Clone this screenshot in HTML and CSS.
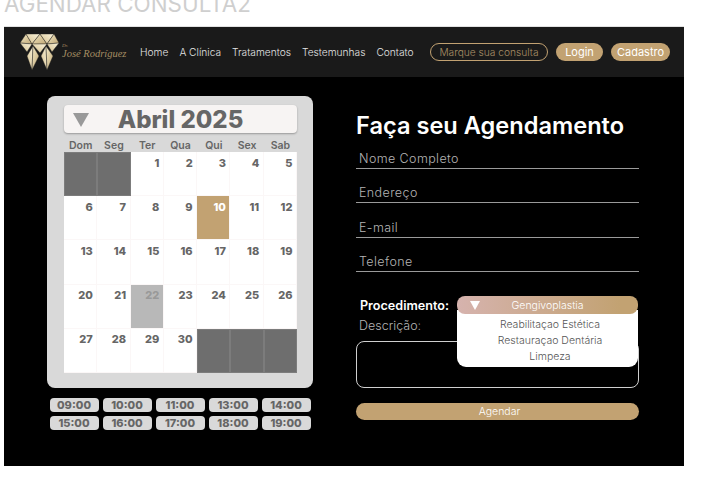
FILE: index.html
```html
<!DOCTYPE html>
<html lang="pt-BR">
<head>
    <meta charset="UTF-8" />
    <meta name="viewport" content="width=device-width, initial-scale=1.0" />
    <title>Agendar Consulta</title>
    <link rel="stylesheet" href="styles.css">
</head>
<body>

    <h2 class="page-label">AGENDAR CONSULTA2</h2>

    <div class="frame">
        <header class="top-bar">
            <div class="brand">
                <svg class="logo" viewBox="20 36 40 36" aria-hidden="true">
                    <defs>
                        <linearGradient id="goldA" x1="0" y1="0" x2="1" y2="1">
                            <stop offset="0" stop-color="#f6ecca" />
                            <stop offset="1" stop-color="#bfa673" />
                        </linearGradient>
                        <linearGradient id="goldB" x1="1" y1="0" x2="0" y2="1">
                            <stop offset="0" stop-color="#fbf4dc" />
                            <stop offset="1" stop-color="#d3bd8b" />
                        </linearGradient>
                    </defs>
                    <g stroke="#1a1a1a" stroke-width="0.4">
                        <polygon fill="url(#goldA)" points="26,36 20,45 32,46" />
                        <polygon fill="url(#goldB)" points="26,36 40,36 32,46" />
                        <polygon fill="url(#goldA)" points="40,36 32,46 47,46" />
                        <polygon fill="url(#goldB)" points="40,36 54,36 47,46" />
                        <polygon fill="url(#goldA)" points="54,36 47,46 59,45" />
                        <polygon fill="url(#goldB)" points="20,45 32,46 27,54" />
                        <polygon fill="url(#goldB)" points="32,46 47,46 40,55" />
                        <polygon fill="url(#goldB)" points="47,46 59,45 52,54" />
                        <polygon fill="url(#goldB)" points="33,48 27,58 32,72" />
                        <polygon fill="url(#goldA)" points="33,48 39,58 32,72" />
                        <polygon fill="url(#goldB)" points="46,48 41,58 47,72" />
                        <polygon fill="url(#goldA)" points="46,48 53,58 47,72" />
                    </g>
                </svg>
                <div class="brand-text">
                    <span class="brand-title">Dr.</span>
                    <span class="brand-name">José Rodríguez</span>
                </div>
            </div>
            <nav class="nav">
                <a href="#">Home</a>
                <a href="#">A Clínica</a>
                <a href="#">Tratamentos</a>
                <a href="#">Testemunhas</a>
                <a href="#">Contato</a>
            </nav>
            <div class="actions">
                <a href="#" class="pill pill-outline">Marque sua consulta</a>
                <a href="#" class="pill pill-login">Login</a>
                <a href="#" class="pill pill-signup">Cadastro</a>
            </div>
        </header>

        <main class="content">
            <section class="left-col">
                <div class="calendar">
                    <div class="month-bar">
                        <span class="arrow"></span>
                        <span class="month-name">Abril 2025</span>
                    </div>
                    <div class="weekdays">
                        <span>Dom</span><span>Seg</span><span>Ter</span><span>Qua</span><span>Qui</span><span>Sex</span><span>Sab</span>
                    </div>
                    <div class="days">
                        <div class="day off"></div>
                        <div class="day off"></div>
                        <div class="day">1</div>
                        <div class="day">2</div>
                        <div class="day">3</div>
                        <div class="day">4</div>
                        <div class="day">5</div>
                        <div class="day">6</div>
                        <div class="day">7</div>
                        <div class="day">8</div>
                        <div class="day">9</div>
                        <div class="day selected">10</div>
                        <div class="day">11</div>
                        <div class="day">12</div>
                        <div class="day">13</div>
                        <div class="day">14</div>
                        <div class="day">15</div>
                        <div class="day">16</div>
                        <div class="day">17</div>
                        <div class="day">18</div>
                        <div class="day">19</div>
                        <div class="day">20</div>
                        <div class="day">21</div>
                        <div class="day blocked">22</div>
                        <div class="day">23</div>
                        <div class="day">24</div>
                        <div class="day">25</div>
                        <div class="day">26</div>
                        <div class="day">27</div>
                        <div class="day">28</div>
                        <div class="day">29</div>
                        <div class="day">30</div>
                        <div class="day off"></div>
                        <div class="day off"></div>
                        <div class="day off"></div>
                    </div>
                </div>
                <div class="times">
                    <button class="time">09:00</button>
                    <button class="time">10:00</button>
                    <button class="time">11:00</button>
                    <button class="time">13:00</button>
                    <button class="time">14:00</button>
                    <button class="time">15:00</button>
                    <button class="time">16:00</button>
                    <button class="time">17:00</button>
                    <button class="time">18:00</button>
                    <button class="time">19:00</button>
                </div>
            </section>

            <section class="right-col">
                <h1 class="form-title">Faça seu Agendamento</h1>
                <div class="field">Nome Completo</div>
                <div class="field">Endereço</div>
                <div class="field">E-mail</div>
                <div class="field">Telefone</div>

                <div class="proc-row">
                    <span class="proc-label">Procedimento:</span>
                    <div class="select">
                        <div class="select-head">
                            <span class="select-arrow"></span>
                            <span>Gengivoplastia</span>
                        </div>
                        <ul class="select-menu">
                            <li>Reabilitaçao Estética</li>
                            <li>Restauraçao Dentária</li>
                            <li>Limpeza</li>
                        </ul>
                    </div>
                </div>
                <div class="desc-label">Descrição:</div>
                <div class="desc-box"></div>
                <button class="submit">Agendar</button>
            </section>
        </main>
    </div>

</body>
</html>
```

FILE: styles.css
```css
* {
    box-sizing: border-box;
}

body {
    margin: 0;
    background-color: #fff;
    font-family: Inter, "Liberation Sans", sans-serif;
    padding-left: 4px;
}

.page-label {
    margin: 0;
    height: 26px;
    overflow: hidden;
    font-size: 22.400px;
    font-weight: 400;
    line-height: 8px;
    color: #cfcfcf;
}

.frame {
    width: 680px;
    height: 440px;
    background-color: #000;
    border-top: 1px solid #e2e2e2;
}

.top-bar {
    display: flex;
    align-items: center;
    height: 50px;
    background-color: #1a1a1a;
    padding-left: 16px;
}

.brand {
    display: flex;
    align-items: center;
    gap: 2px;
    width: 120px;
}

.logo {
    width: 40px;
    height: 36px;
}

.brand-text {
    display: flex;
    flex-direction: column;
    font-family: "Liberation Serif", serif;
    font-style: italic;
    color: #a58d63;
    white-space: nowrap;
}

.brand-title {
    font-size: 5px;
    line-height: 4px;
}

.brand-name {
    font-size: 10.500px;
    line-height: 12px;
}

.nav {
    display: flex;
    gap: 11px;
    width: 290px;
}

.nav a {
    font-size: 10.200px;
    font-weight: 300;
    color: #e4e4e4;
    text-decoration: none;
    white-space: nowrap;
}

.actions {
    display: flex;
    gap: 8px;
}

.pill {
    display: flex;
    align-items: center;
    justify-content: center;
    height: 18px;
    border-radius: 9px;
    font-size: 11px;
    font-weight: 400;
    color: #fff;
    text-decoration: none;
    background-color: #c2a272;
}

.pill-outline {
    width: 118px;
    background: none;
    border: 1px solid #c2a272;
    color: #a98f66;
    font-size: 10.200px;
    font-weight: 300;
}

.pill-login {
    width: 47px;
}

.pill-signup {
    width: 59px;
}

.content {
    display: flex;
    gap: 43px;
    padding: 19px 0 0 43px;
}

.left-col {
    width: 266px;
}

.calendar {
    height: 292px;
    padding: 9px 16px 0 17px;
    background-color: #d9d9d9;
    border-radius: 8px;
}

.month-bar {
    position: relative;
    display: flex;
    align-items: center;
    justify-content: center;
    height: 28px;
    background-color: #f7f4f3;
    border-radius: 4px;
    box-shadow: 0 1px 2px rgba(0, 0, 0, 0.3);
}

.arrow {
    position: absolute;
    left: 9px;
    top: 8px;
    border-left: 8px solid transparent;
    border-right: 8px solid transparent;
    border-top: 14px solid #999;
}

.month-name {
    font-size: 24px;
    font-weight: 800;
    color: #666;
}

.weekdays {
    display: grid;
    grid-template-columns: repeat(7, 1fr);
    height: 19px;
    padding-top: 6px;
    font-size: 10.500px;
    font-weight: 600;
    text-align: center;
    color: #666;
}

.days {
    display: grid;
    grid-template-columns: repeat(7, 1fr);
    grid-auto-rows: 44.2px;
    width: 233px;
    background-color: #fff;
}

.day {
    padding: 3.500px 3.500px 0 0;
    border: 1px solid #fbf7f7;
    border-width: 0 1px 1px 0;
    font-size: 11px;
    font-weight: 800;
    text-align: right;
    color: #666;
}

.day.off {
    background-color: #6e6e6e;
    border: 1px solid #7c7c7c;
}

.day.selected {
    background-color: #c2a272;
    color: #fff;
}

.day.blocked {
    background-color: #b8b8b8;
    color: #999;
}

.times {
    display: grid;
    grid-template-columns: repeat(5, 49px);
    gap: 4px;
    justify-content: center;
    margin-top: 10px;
}

.time {
    height: 14px;
    padding: 0;
    border: none;
    border-radius: 4px;
    background-color: #d9d9d9;
    font-family: inherit;
    font-size: 11px;
    font-weight: 800;
    line-height: 14px;
    color: #666;
}

.right-col {
    width: 283px;
}

.form-title {
    margin: 15px 0 3px 0;
    font-size: 23.600px;
    font-weight: 600;
    line-height: 29px;
    color: #fff;
    white-space: nowrap;
}

.field {
    height: 26px;
    margin-bottom: 8.400px;
    padding-left: 3px;
    border-bottom: 1px solid #9a9a9a;
    font-size: 12.500px;
    font-weight: 300;
    letter-spacing: 0.4px;
    line-height: 31px;
    color: #b4b4b4;
}

.proc-row {
    display: flex;
    align-items: center;
    height: 18px;
    margin-top: 24px;
    padding-left: 4px;
}

.proc-label {
    width: 97px;
    font-size: 12.600px;
    font-weight: 600;
    color: #fff;
}

.select {
    position: relative;
    width: 181px;
    height: 18px;
}

.select-head {
    position: relative;
    z-index: 2;
    display: flex;
    align-items: center;
    justify-content: center;
    height: 18px;
    border-radius: 8px;
    background: linear-gradient(90deg, #d6b3ae, #c2a272 90%);
    font-size: 10.500px;
    font-weight: 300;
    color: #fff;
}

.select-arrow {
    position: absolute;
    left: 13px;
    top: 5px;
    border-left: 5px solid transparent;
    border-right: 5px solid transparent;
    border-top: 9px solid #fff;
}

.select-menu {
    position: absolute;
    z-index: 1;
    top: 14px;
    left: 0;
    width: 181px;
    height: 57px;
    margin: 0;
    padding: 7px 0 0 5px;
    list-style: none;
    background-color: #fff;
    border-radius: 0 0 9px 9px;
    font-size: 10.500px;
    font-weight: 300;
    line-height: 16px;
    text-align: center;
    color: #555;
}

.desc-label {
    margin-top: 4px;
    padding-left: 3px;
    font-size: 12.500px;
    font-weight: 300;
    line-height: 16px;
    color: #b4b4b4;
}

.desc-box {
    height: 47px;
    margin-top: 7px;
    border: 1px solid #cfcfcf;
    border-radius: 8px;
}

.submit {
    display: block;
    width: 283px;
    height: 17px;
    margin-top: 15px;
    padding: 0 0 0 4px;
    border: none;
    border-radius: 9px;
    background-color: #c2a272;
    font-family: inherit;
    font-size: 10.500px;
    font-weight: 300;
    color: #fff;
}
```
